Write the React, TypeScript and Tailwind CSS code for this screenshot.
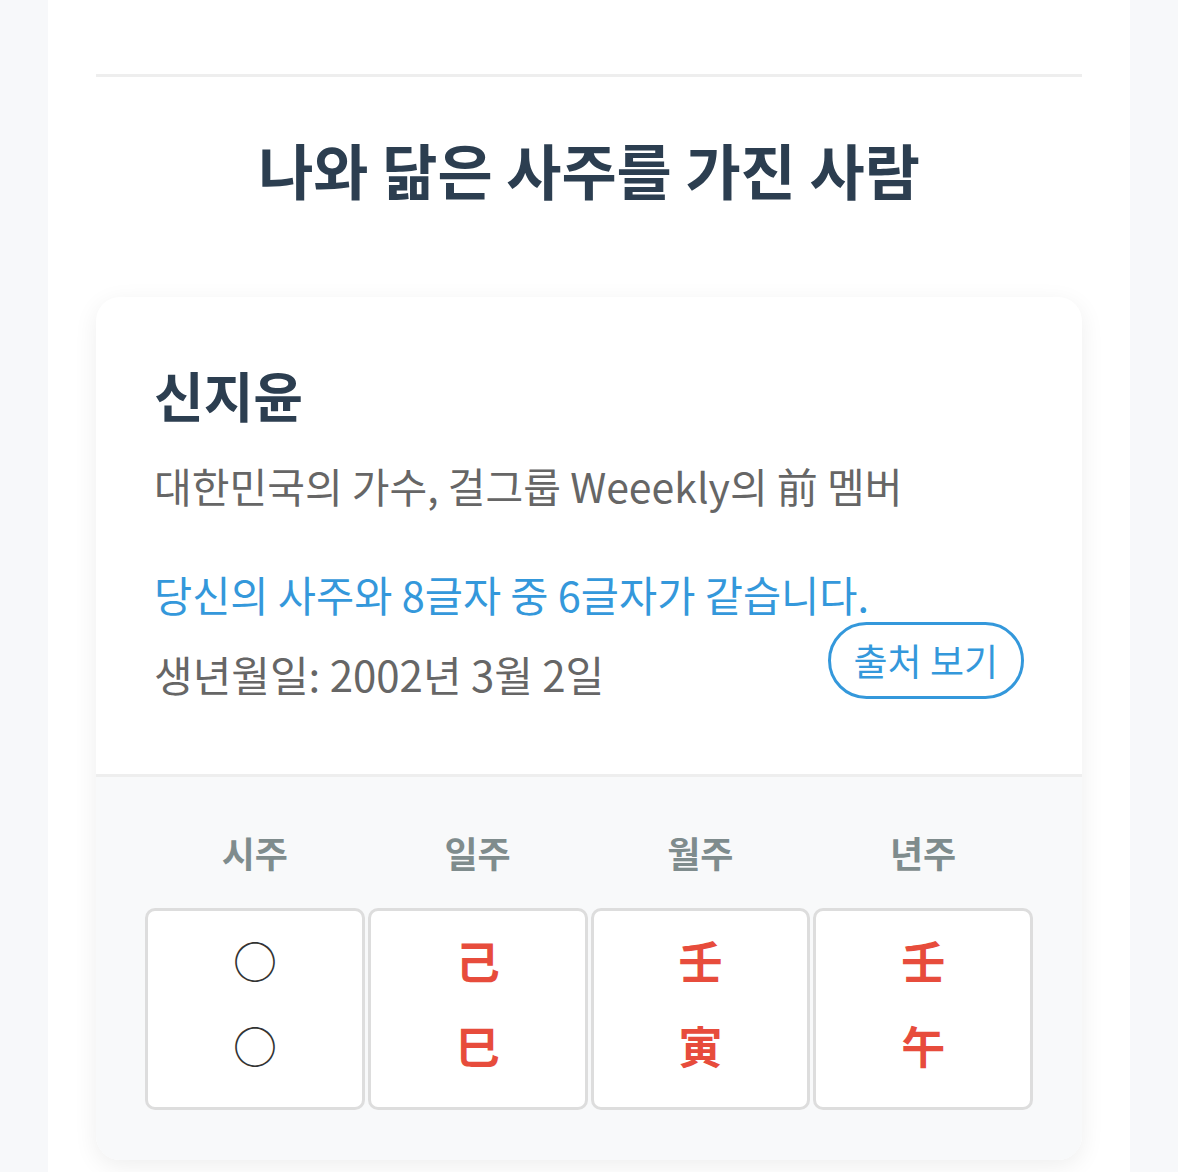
const font = { fontFamily: '"Noto Sans CJK KR", "Noto Sans", sans-serif' };

const pillars = [
  { label: '시주', top: '○', bottom: '○', muted: true },
  { label: '일주', top: '己', bottom: '巳' },
  { label: '월주', top: '壬', bottom: '寅' },
  { label: '년주', top: '壬', bottom: '午' },
];

export default function App() {
  return (
    <div className="min-h-screen bg-[#f7f8fa]" style={font}>
      <div className="mx-[48px] min-h-screen bg-white px-[48px] pt-[74px] pb-[40px]">
        <div className="h-[3px] bg-[#eeeeee]" />

        <h2 className="mt-[58px] text-center text-[60px] font-bold leading-[67px] text-[#2c3e50]">
          나와 닮은 사주를 가진 사람
        </h2>

        <div className="mt-[95px] overflow-hidden rounded-[24px] bg-white shadow-[0_6px_24px_rgba(0,0,0,0.07)]">
          <div className="px-[58px] pt-[68px] pb-[72px]">
            <h3 className="text-[54px] font-bold leading-[60px] text-[#2c3e50]">신지윤</h3>
            <p className="mt-[32px] text-[41px] leading-[56px] text-[#666666]">
              대한민국의 가수, 걸그룹 Weeekly의 前 멤버
            </p>
            <p className="mt-[53px] text-[41.5px] leading-[56px] text-[#3498db]">
              당신의 사주와 8글자 중 6글자가 같습니다.
            </p>
            <div className="flex items-end justify-between">
              <p className="text-[42px] leading-[56px] text-[#666666]">생년월일: 2002년 3월 2일</p>
              <button className="mb-[3px] h-[77px] rounded-full border-[3px] border-[#3498db] px-[23px] text-[37px] leading-none text-[#3498db]">
                출처 보기
              </button>
            </div>
          </div>

          <div className="border-t-[3px] border-[#eeeeee] bg-[#f8f9fa] px-[49px] pt-[55px] pb-[50px]">
            <div className="grid grid-cols-4 gap-[3px]">
              {pillars.map((p) => (
                <div key={p.label} className="text-center text-[36px] font-semibold leading-[40px] text-[#7f8c8d]">
                  {p.label}
                </div>
              ))}
            </div>
            <div className="mt-[36px] grid grid-cols-4 gap-[3px]">
              {pillars.map((p) => (
                <div
                  key={p.label}
                  className="flex h-[202px] flex-col items-center justify-center gap-[25px] rounded-[10px] border-[3px] border-[#dddddd] bg-white pb-[14px]"
                >
                  <span className={`text-[44px] leading-[60px] ${p.muted ? 'font-normal text-[#333333]' : 'font-bold text-[#e74c3c]'}`}>
                    {p.top}
                  </span>
                  <span className={`text-[44px] leading-[60px] ${p.muted ? 'font-normal text-[#333333]' : 'font-bold text-[#e74c3c]'}`}>
                    {p.bottom}
                  </span>
                </div>
              ))}
            </div>
          </div>
        </div>
      </div>
    </div>
  );
}
